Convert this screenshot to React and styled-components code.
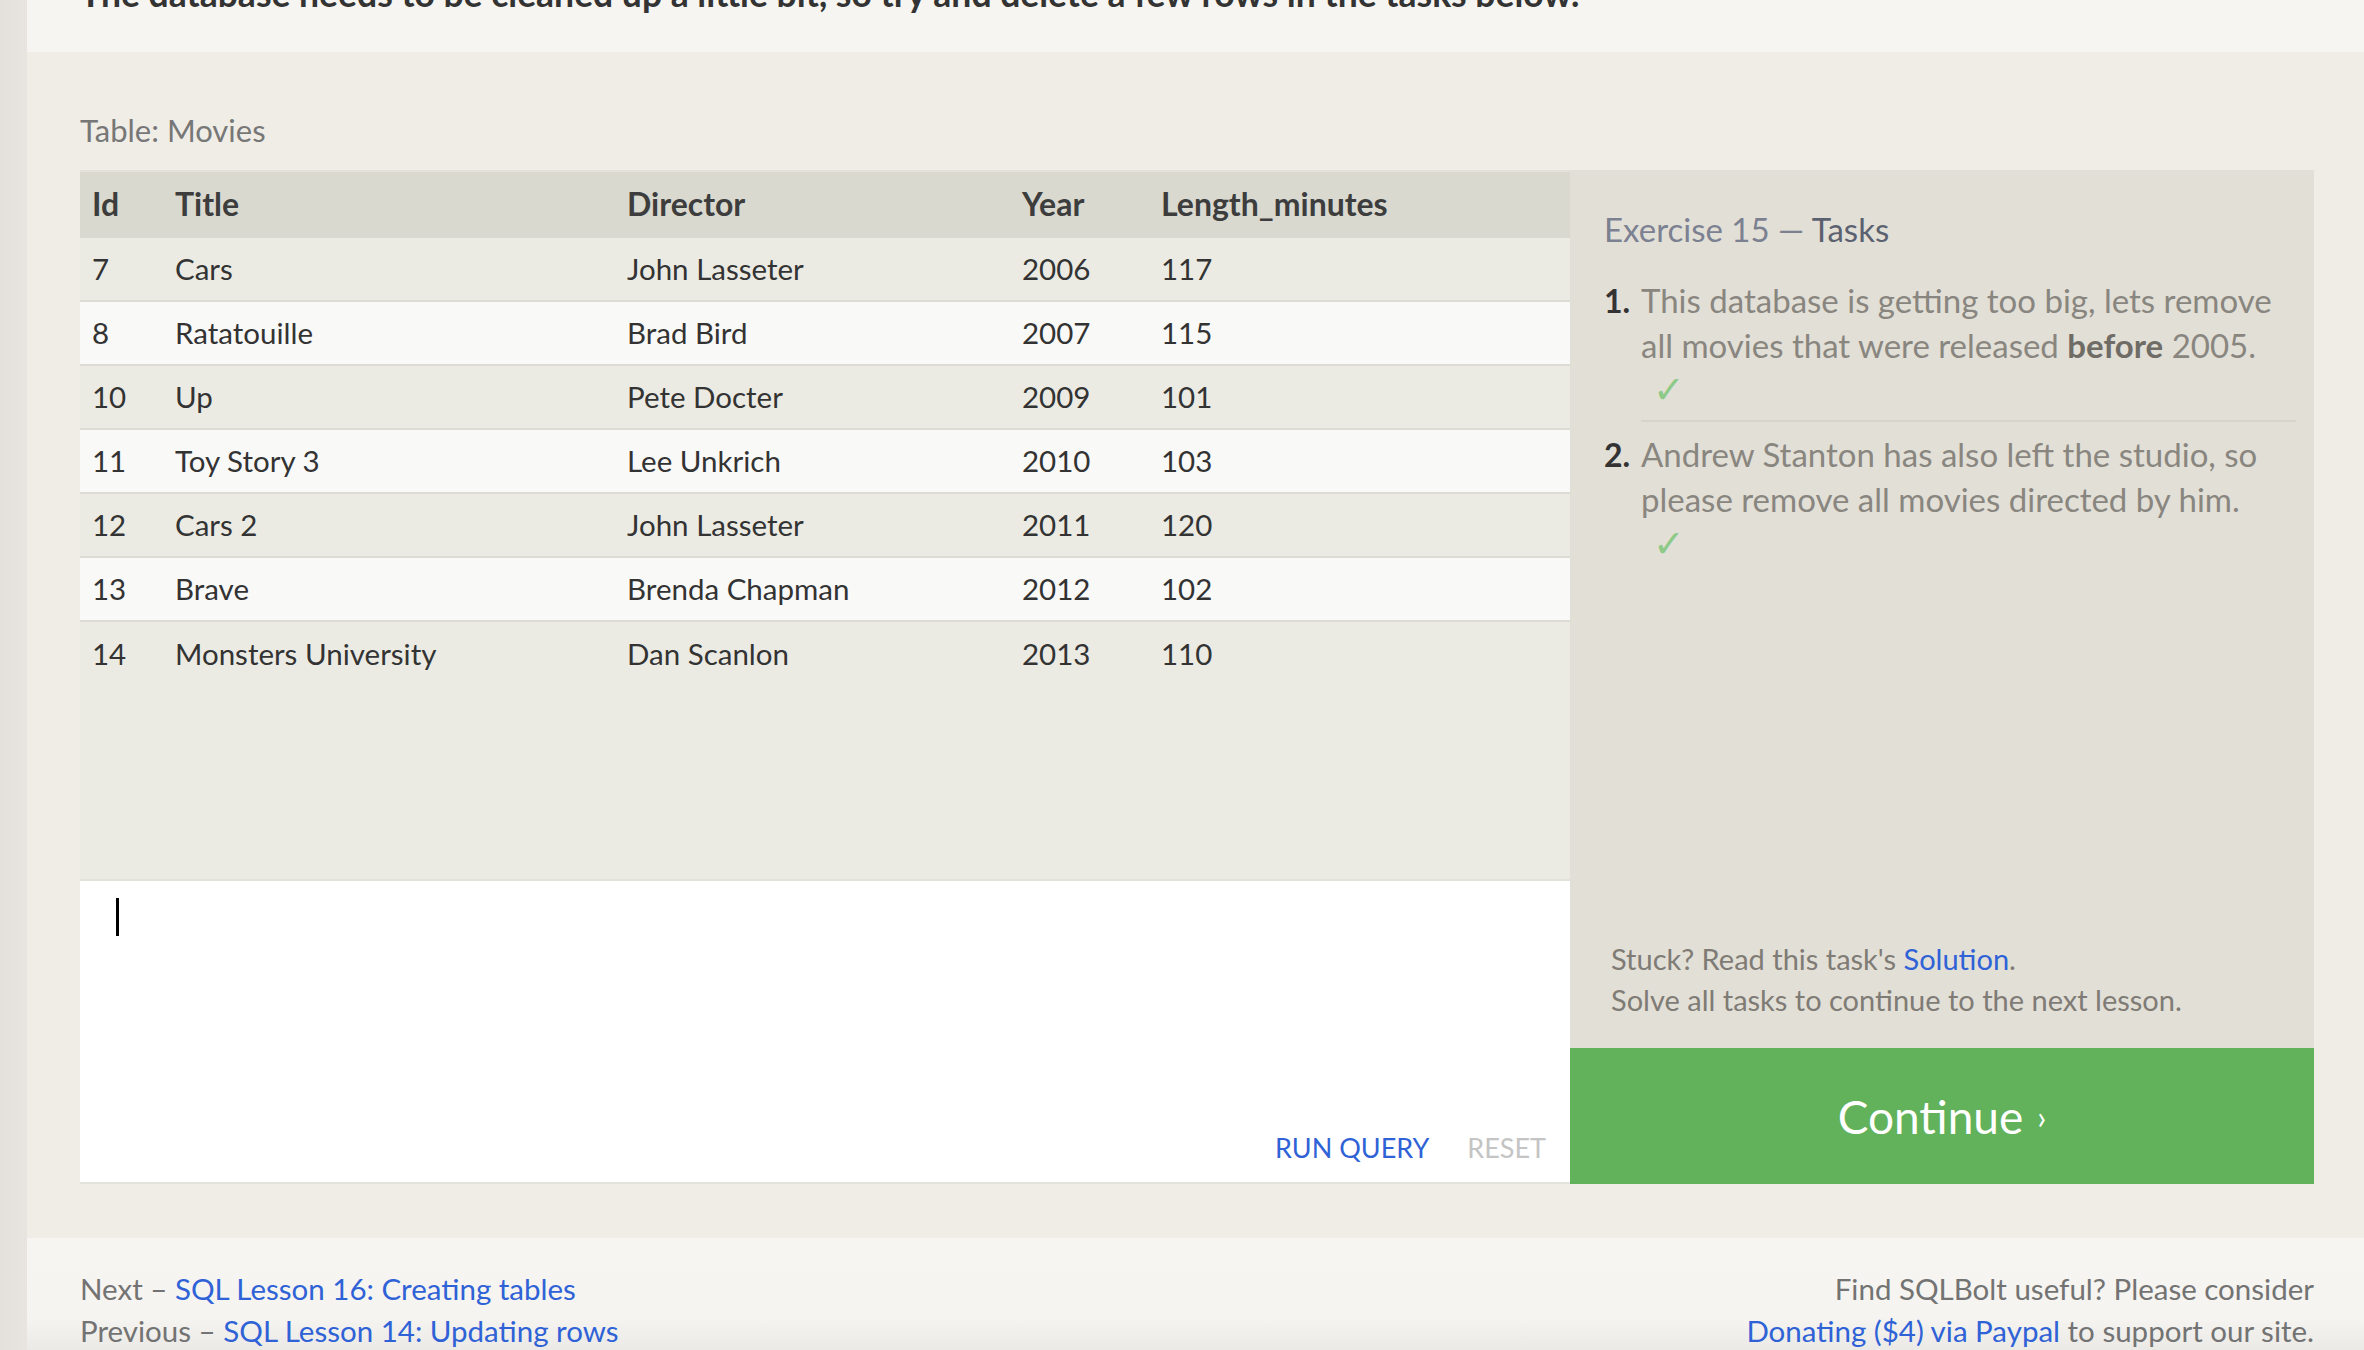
import styled, { createGlobalStyle } from "styled-components";

const GlobalStyle = createGlobalStyle`
    html, body {
        margin: 0;
        padding: 0;
        overflow: hidden;
        background: #efede6;
        font-family: Lato, "Liberation Sans", sans-serif;
    }
    * { box-sizing: border-box; }
`;

const movies = [
    [7, "Cars", "John Lasseter", 2006, 117],
    [8, "Ratatouille", "Brad Bird", 2007, 115],
    [10, "Up", "Pete Docter", 2009, 101],
    [11, "Toy Story 3", "Lee Unkrich", 2010, 103],
    [12, "Cars 2", "John Lasseter", 2011, 120],
    [13, "Brave", "Brenda Chapman", 2012, 102],
    [14, "Monsters University", "Dan Scanlon", 2013, 110],
];

const App = () => {
    return (
        <Page>
            <GlobalStyle />
            <Strip />
            <Main>
                <Intro>
                    <p>The database needs to be cleaned up a little bit, so try and delete a few rows in the tasks below.</p>
                </Intro>
                <Exercise>
                    <TableLabel>Table: Movies</TableLabel>
                    <Workspace>
                        <LeftPane>
                            <TableBox>
                                <Row head>
                                    <Cell>Id</Cell>
                                    <Cell>Title</Cell>
                                    <Cell>Director</Cell>
                                    <Cell>Year</Cell>
                                    <Cell>Length_minutes</Cell>
                                </Row>
                                {movies.map((m, i) => (
                                    <Row key={m[0]} even={i % 2 === 1} last={i === movies.length - 1}>
                                        {m.map((v, j) => <Cell key={j}>{v}</Cell>)}
                                    </Row>
                                ))}
                            </TableBox>
                            <Editor>
                                <Caret />
                                <EditorActions>
                                    <ActionLink>RUN QUERY</ActionLink>
                                    <ActionLink muted>RESET</ActionLink>
                                </EditorActions>
                            </Editor>
                        </LeftPane>
                        <RightPane>
                            <Tasks>
                                <TasksTitle>Exercise 15 — <b>Tasks</b></TasksTitle>
                                <TaskList>
                                    <Task>
                                        <TaskNum>1.</TaskNum>
                                        <TaskBody>
                                            This database is getting too big, lets remove all movies that were released <b>before</b> 2005.
                                            <Check>✓</Check>
                                        </TaskBody>
                                    </Task>
                                    <Task>
                                        <TaskNum>2.</TaskNum>
                                        <TaskBody>
                                            Andrew Stanton has also left the studio, so please remove all movies directed by him.
                                            <Check>✓</Check>
                                        </TaskBody>
                                    </Task>
                                </TaskList>
                                <Hint>
                                    Stuck? Read this task's <a>Solution</a>.<br />
                                    Solve all tasks to continue to the next lesson.
                                </Hint>
                            </Tasks>
                            <ContinueButton>Continue <span>›</span></ContinueButton>
                        </RightPane>
                    </Workspace>
                </Exercise>
                <Footer>
                    <div>
                        <p>Next – <a>SQL Lesson 16: Creating tables</a></p>
                        <p>Previous – <a>SQL Lesson 14: Updating rows</a></p>
                    </div>
                    <FooterRight>
                        <p>Find SQLBolt useful? Please consider</p>
                        <p><a>Donating ($4) via Paypal</a> to support our site.</p>
                    </FooterRight>
                </Footer>
            </Main>
        </Page>
    );
};

export default App;

const Page = styled.div`
    display: flex;
    width: 100%;
    min-height: 100vh;
`;

const Strip = styled.div`
    width: 27px;
    flex-shrink: 0;
    background: linear-gradient(to right, #e4e0db, #e8e5e0);
`;

const Main = styled.div`
    flex: 1;
    display: flex;
    flex-direction: column;
`;

const Intro = styled.div`
    height: 52px;
    background-color: #f6f5f1;
    padding-left: 53px;
    overflow: hidden;
    p {
        margin: -26px 0 0 0;
        font-size: 35.5px;
        line-height: 40px;
        font-weight: bold;
        color: #333;
        white-space: nowrap;
    }
`;

const Exercise = styled.div`
    background-color: #efede6;
    padding: 58px 50px 54px 53px;
`;

const TableLabel = styled.div`
    font-size: 31px;
    line-height: 40px;
    color: #777;
    margin-bottom: 20px;
`;

const Workspace = styled.div`
    display: flex;
    height: 1014px;
`;

const LeftPane = styled.div`
    width: 1490px;
    display: flex;
    flex-direction: column;
`;

const TableBox = styled.div`
    height: 709px;
    background-color: #ebebe4;
    border-top: 2px solid #e2e2db;
`;

const Row = styled.div`
    display: grid;
    grid-template-columns: 83px 452px 395px 139px 1fr;
    height: ${p => (p.head ? "66px" : "64px")};
    padding-bottom: ${p => (p.head ? "3px" : "1px")};
    align-items: center;
    background-color: ${p => (p.head ? "#d9d9d0" : p.even ? "#f9f9f8" : "#ebebe4")};
    border-bottom: ${p => (p.head || p.last ? "none" : "2px solid #dcdcd5")};
    font-size: ${p => (p.head ? "32px" : "29.5px")};
    font-weight: ${p => (p.head ? "bold" : "normal")};
    color: ${p => (p.head ? "#3d3d3d" : "#333")};
`;

const Cell = styled.div`
    padding-left: 12px;
    white-space: nowrap;
`;

const Editor = styled.div`
    flex: 1;
    background-color: #fff;
    border-top: 2px solid #e3e3dc;
    border-bottom: 2px solid #e3e3dc;
    display: flex;
    flex-direction: column;
    justify-content: space-between;
    padding: 17px 24px 18px 36px;
`;

const Caret = styled.div`
    width: 3px;
    height: 38px;
    background-color: #000;
`;

const EditorActions = styled.div`
    display: flex;
    justify-content: flex-end;
    gap: 38px;
`;

const ActionLink = styled.span`
    font-size: 27px;
    color: ${p => (p.muted ? "#c4c4c4" : "#2f62d6")};
`;

const RightPane = styled.div`
    flex: 1;
    display: flex;
    flex-direction: column;
`;

const Tasks = styled.div`
    flex: 1;
    background-color: #e2dfd7;
    display: flex;
    flex-direction: column;
    padding: 38px 18px 28px 34px;
`;

const TasksTitle = styled.div`
    font-size: 33px;
    line-height: 42px;
    color: #7c8191;
    margin-bottom: 28px;
    b {
        font-weight: normal;
        color: #5c6170;
    }
`;

const TaskList = styled.div`
    flex: 1;
`;

const Task = styled.div`
    display: flex;
    padding-bottom: 8px;
    & + & {
        padding-top: 10px;
        margin-left: 37px;
        border-top: 2px solid #d7d4cb;
        > span:first-child {
            margin-left: -37px;
        }
    }
`;

const TaskNum = styled.span`
    width: 37px;
    flex-shrink: 0;
    font-size: 32px;
    line-height: 45px;
    font-weight: bold;
    color: #333;
`;

const TaskBody = styled.div`
    font-size: 33px;
    line-height: 45px;
    color: #898680;
    b {
        color: #6f6c66;
    }
`;

const Check = styled.div`
    color: #8dca88;
    font-family: "DejaVu Sans", sans-serif;
    font-size: 38px;
    line-height: 44px;
    padding-left: 12px;
`;

const Hint = styled.div`
    font-size: 29px;
    line-height: 41px;
    color: #7f7b75;
    padding-left: 7px;
    a {
        color: #2f62d6;
    }
`;

const ContinueButton = styled.div`
    height: 136px;
    background-color: #61b25a;
    color: #fff;
    font-size: 46px;
    display: flex;
    align-items: center;
    justify-content: center;
    gap: 14px;
    span {
        font-size: 32px;
    }
`;

const Footer = styled.div`
    flex: 1;
    display: flex;
    justify-content: space-between;
    padding: 30px 50px 0 53px;
    background: linear-gradient(to bottom, #f6f5f1 0%, #f5f4f0 70%, #ebe9e5 100%);
    font-size: 29.5px;
    line-height: 42px;
    color: #737373;
    p {
        margin: 0;
    }
    a {
        color: #2f62d6;
    }
`;

const FooterRight = styled.div`
    text-align: right;
`;
